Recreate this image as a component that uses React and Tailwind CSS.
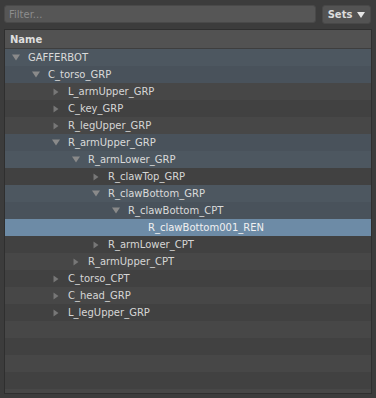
const rows = [
  { name: "GAFFERBOT", level: 0, arrow: "open", kind: "anc" },
  { name: "C_torso_GRP", level: 1, arrow: "open", kind: "anc" },
  { name: "L_armUpper_GRP", level: 2, arrow: "closed" },
  { name: "C_key_GRP", level: 2, arrow: "closed" },
  { name: "R_legUpper_GRP", level: 2, arrow: "closed" },
  { name: "R_armUpper_GRP", level: 2, arrow: "open", kind: "anc" },
  { name: "R_armLower_GRP", level: 3, arrow: "open", kind: "anc" },
  { name: "R_clawTop_GRP", level: 4, arrow: "closed" },
  { name: "R_clawBottom_GRP", level: 4, arrow: "open", kind: "anc" },
  { name: "R_clawBottom_CPT", level: 5, arrow: "open", kind: "anc" },
  { name: "R_clawBottom001_REN", level: 6, arrow: null, kind: "sel" },
  { name: "R_armLower_CPT", level: 4, arrow: "closed" },
  { name: "R_armUpper_CPT", level: 3, arrow: "closed" },
  { name: "C_torso_CPT", level: 2, arrow: "closed" },
  { name: "C_head_GRP", level: 2, arrow: "closed" },
  { name: "L_legUpper_GRP", level: 2, arrow: "closed" },
];

function rowBg(kind, i) {
  const even = i % 2 === 0;
  if (kind === "sel") return "bg-[#6d8ba6] text-[#f0f0f0]";
  if (kind === "anc") return even ? "bg-[#4d5760] text-[#dadada]" : "bg-[#49525b] text-[#dadada]";
  return even ? "bg-[#474747] text-[#d6d6d6]" : "bg-[#414141] text-[#d6d6d6]";
}

function Arrow({ type }) {
  if (type === "open") {
    return (
      <svg width="8" height="7" viewBox="0 0 8 7" className="shrink-0">
        <path d="M0 0.5 L8 0.5 L4 6.5 Z" fill="#8a8a8a" />
      </svg>
    );
  }
  if (type === "closed") {
    return (
      <svg width="8" height="8" viewBox="0 0 8 8" className="shrink-0">
        <path d="M1.5 0.5 L6.5 4 L1.5 7.5 Z" fill="#777777" />
      </svg>
    );
  }
  return <span className="w-[8px] shrink-0" />;
}

export default function App() {
  const empty = [16, 17, 18, 19, 20];
  return (
    <div className="w-[376px] h-[398px] bg-[#3c3c3c] flex flex-col pt-[5px] pl-[4px] pr-[5px] font-['DejaVu_Sans',sans-serif] text-[10px] overflow-hidden">
      <div className="flex h-[18px] gap-[6px]">
        <div className="w-[312px] h-[18px] rounded-[3px] bg-[#565656] border border-[#494949] flex items-center pl-[4px] text-[#8d8d8d]">
          Filter...
        </div>
        <div className="flex-1 h-[19px] rounded-[3px] bg-[#535353] border border-[#484848] flex items-center justify-center gap-[5px] font-bold text-[#dcdcdc]">
          <span>Sets</span>
          <svg width="8" height="6" viewBox="0 0 8 6">
            <path d="M0 0 L8 0 L4 6 Z" fill="#e6e6e6" />
          </svg>
        </div>
      </div>

      <div className="mt-[6px] w-[368px] h-[365px] border border-[#2f2f2f] bg-[#444444] flex flex-col overflow-hidden">
        <div className="h-[19px] shrink-0 bg-[#525252] border-b border-[#3e3e3e] flex items-center pl-[5px] font-bold text-[#dedede]">
          Name
        </div>
        {rows.map((r, i) => (
          <div key={r.name} className={`h-[17px] shrink-0 flex items-center ${rowBg(r.kind, i)}`}>
            <div className="flex items-center" style={{ paddingLeft: 7 + r.level * 20 }}>
              <Arrow type={r.arrow} />
              <span className="ml-[8px] leading-none">{r.name}</span>
            </div>
          </div>
        ))}
        {empty.map((i) => (
          <div key={i} className={`h-[17px] shrink-0 ${rowBg(null, i)}`} />
        ))}
      </div>
    </div>
  );
}
